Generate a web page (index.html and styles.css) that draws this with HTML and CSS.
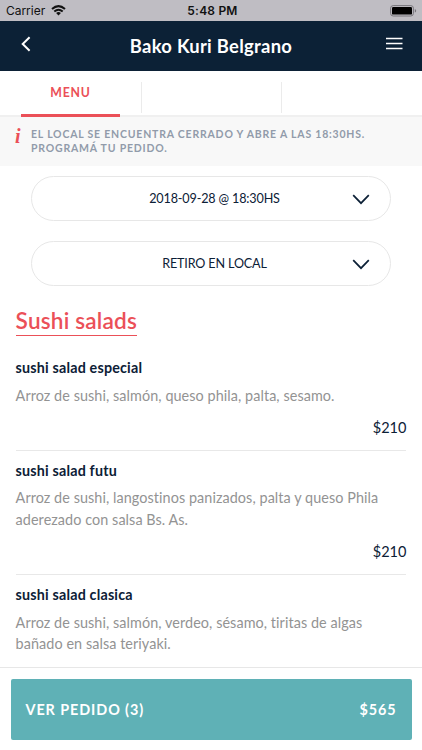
FILE: index.html
```html
<!DOCTYPE html>
<html lang="es">
<head>
<meta charset="utf-8">
<title>Bako Kuri Belgrano</title>
<link rel="stylesheet" href="styles.css">
</head>
<body>
<div class="app">
  <div class="status">
    <div class="carrier"><span>Carrier</span>
      <svg width="15" height="11" viewBox="0 0 15 11" fill="none" stroke="#111" stroke-width="2"><path d="M1 4Q7.5-1.8 14 4M3.3 6.5Q7.5 2.9 11.7 6.5"/><path d="M5.1 8Q7.5 6 9.9 8L7.5 10.5Z" fill="#111" stroke="none"/></svg>
    </div>
    <div class="clock">5:48 PM</div>
    <svg class="battery" width="27" height="12" viewBox="0 0 27 12"><rect x=".6" y=".6" width="22.8" height="10.4" rx="2.6" fill="none" stroke="#77757b"/><rect x="2" y="2" width="20" height="7.6" rx="1.2" fill="#000"/><path d="M24.8 4Q26.2 4.4 26.2 5.8T24.8 7.6Z" fill="#77757b"/></svg>
  </div>
  <header class="header">
    <svg class="back" width="10" height="16" viewBox="0 0 10 16" fill="none" stroke="#fff" stroke-width="2"><path d="M8.6 1.2 1.7 8 8.6 14.8"/></svg>
    <h1>Bako Kuri Belgrano</h1>
    <svg class="burger" width="17" height="13" viewBox="0 0 17 13" stroke="#fff" stroke-width="1.6"><path d="M0 1.5H16.5M0 6.5H16.5M0 11.5H16.5"/></svg>
  </header>
  <nav class="tabs">
    <div class="tab active"><span>MENU</span></div>
    <div class="tab"></div>
    <div class="tab"></div>
  </nav>
  <div class="notice">
    <span class="info">i</span>
    <p>EL LOCAL SE ENCUENTRA CERRADO Y ABRE A LAS 18:30HS.<br>PROGRAMÁ TU PEDIDO.</p>
  </div>
  <main>
    <div class="selects">
      <div class="select"><span>2018-09-28 @ 18:30HS</span><svg class="chevron" width="18" height="11" viewBox="0 0 18 11" fill="none" stroke="#0c2036" stroke-width="1.7"><path d="M1.2 1.2 9 9.2 16.8 1.2"/></svg></div>
      <div class="select"><span>RETIRO EN LOCAL</span><svg class="chevron" width="18" height="11" viewBox="0 0 18 11" fill="none" stroke="#0c2036" stroke-width="1.7"><path d="M1.2 1.2 9 9.2 16.8 1.2"/></svg></div>
    </div>
    <h2>Sushi salads</h2>
    <article class="item">
      <h3>sushi salad especial</h3>
      <p>Arroz de sushi, salmón, queso phila, palta, sesamo.</p>
      <div class="price">$210</div>
    </article>
    <article class="item">
      <h3>sushi salad futu</h3>
      <p>Arroz de sushi, langostinos panizados, palta y queso Phila<br>aderezado con salsa Bs. As.</p>
      <div class="price">$210</div>
    </article>
    <article class="item">
      <h3>sushi salad clasica</h3>
      <p>Arroz de sushi, salmón, verdeo, sésamo, tiritas de algas<br>bañado en salsa teriyaki.</p>
    </article>
  </main>
  <footer class="footer">
    <div class="order"><span>VER PEDIDO (3)</span><span class="total">$565</span></div>
  </footer>
</div>
</body>
</html>
```
FILE: styles.css
```css
* { box-sizing: border-box; }
body { margin: 0; background: #fff; font-family: Lato, sans-serif; font-variant-ligatures: none; color: #0c2036; }
h1, h2, h3, p { margin: 0; }
svg { display: block; flex: none; }
.app { width: 422px; height: 750px; display: flex; flex-direction: column; overflow: hidden; }

.status { flex: none; height: 21px; background: #bfbdc3; display: grid; grid-template-columns: 1fr auto 1fr; align-items: center; padding: 0 5px 0 6px; font-family: Inter, sans-serif; font-size: 12px; line-height: 20px; color: #111; }
.carrier { display: flex; align-items: center; gap: 6px; letter-spacing: -.03px; }
.clock { font-weight: 600; letter-spacing: .2px; margin-left: 2px; }
.battery { justify-self: end; }

.header { flex: none; height: 50px; background: #0c2136; display: grid; grid-template-columns: 60px 1fr 60px; color: #fff; }
.header h1 { text-align: center; font-size: 18.4px; line-height: 50px; font-weight: 700; letter-spacing: .28px; white-space: nowrap; }
.back { margin: 15px 0 0 21px; }
.burger { margin: 16px 19px 0 auto; }

.tabs { flex: none; height: 46px; display: grid; grid-template-columns: 141px 140px 1fr; border-bottom: 2px solid #f0f0f0; }
.tab + .tab { border-left: 1px solid #ebebeb; height: 31px; margin-top: 11px; }
.active { padding: 0 21px; }
.active span { display: block; height: 46px; border-bottom: 3px solid #eb5058; color: #eb5058; font-size: 12.3px; font-weight: 700; line-height: 44px; letter-spacing: .8px; text-align: center; }

.notice { flex: none; height: 49px; background: #f8f8f8; display: flex; padding: 10px 15px 0; }
.info { width: 16px; font: italic bold 20px/18px "Liberation Serif", serif; color: #eb5058; }
.notice p { font-size: 10.5px; line-height: 14.2px; font-weight: 700; letter-spacing: .8px; color: #919baa; white-space: nowrap; }

main { flex: 1; min-height: 0; padding: 10px 15.6px 0; overflow: hidden; }
.selects { display: grid; gap: 20px; padding: 0 15.4px; }
.select { height: 45px; border: 1px solid #e7e7e7; border-radius: 23px; display: grid; grid-template-columns: 57px 1fr 50px; align-items: center; font-size: 12.6px; line-height: 20px; letter-spacing: -.15px; }
.select span { grid-column: 2; text-align: center; }
.chevron { margin: 1px 0 0 12px; }
h2 { width: fit-content; margin-top: 20px; height: 30px; border-bottom: 1px solid #eb5058; color: #eb5058; font-size: 22.6px; line-height: 29px; font-weight: 600; letter-spacing: .19px; white-space: nowrap; }
.item { padding: 10px 0 11.7px; border-bottom: 1px solid #e8e8e8; }
.item:last-child { border-bottom: 0; }
h2 + .item { margin-top: 12px; }
h3 { font-size: 14.3px; line-height: 20px; font-weight: 700; letter-spacing: .19px; }
.item p { margin-top: 6.5px; font-size: 14.4px; line-height: 21.2px; letter-spacing: .07px; color: #939393; white-space: nowrap; }
.price { margin-top: 12.6px; font-size: 14.5px; line-height: 20px; text-align: right; }

.footer { flex: none; height: 83px; border-top: 1px solid #e7e7e7; padding: 11px 10.5px 0; background: #fff; }
.order { height: 61px; border-radius: 2px; background: #5fb1b6; color: #fff; display: flex; justify-content: space-between; align-items: center; padding: 0 15px; font-size: 14.4px; font-weight: 700; letter-spacing: .92px; }
```
